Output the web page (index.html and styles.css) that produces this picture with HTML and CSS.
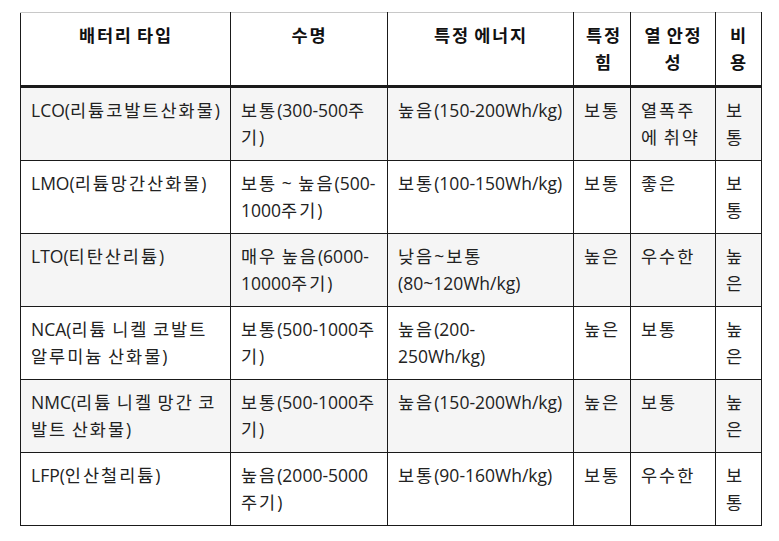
FILE: index.html
```html
<!DOCTYPE html>
<html lang="ko">
<head>
<meta charset="utf-8">
<title>배터리 타입 비교</title>
<link rel="stylesheet" href="styles.css">
</head>
<body>
<div class="page">
<table class="spec">
  <colgroup>
    <col class="c1"><col class="c2"><col class="c3"><col class="c4"><col class="c5"><col class="c6">
  </colgroup>
  <thead>
    <tr>
      <th>배터리 타입</th>
      <th>수명</th>
      <th>특정 에너지</th>
      <th>특정 힘</th>
      <th>열 안정성</th>
      <th>비용</th>
    </tr>
  </thead>
  <tbody>
    <tr>
      <td>LCO(<span class="k">리튬코발트산화물</span>)</td>
      <td><span class="k">보통</span>(300-500<span class="k">주기</span>)</td>
      <td><span class="k">높음</span>(150-200Wh/kg)</td>
      <td><span class="k">보통</span></td>
      <td><span class="k">열폭주에 취약</span></td>
      <td><span class="k">보통</span></td>
    </tr>
    <tr>
      <td>LMO(<span class="k">리튬망간산화물</span>)</td>
      <td><span class="k">보통 ~ 높음</span>(500-1000<span class="k">주기</span>)</td>
      <td><span class="k">보통</span>(100-150Wh/kg)</td>
      <td><span class="k">보통</span></td>
      <td><span class="k">좋은</span></td>
      <td><span class="k">보통</span></td>
    </tr>
    <tr>
      <td>LTO(<span class="k">티탄산리튬</span>)</td>
      <td><span class="k">매우 높음</span>(6000-10000<span class="k">주기</span>)</td>
      <td><span class="k">낮음~보통</span>(80~120Wh/kg)</td>
      <td><span class="k">높은</span></td>
      <td><span class="k">우수한</span></td>
      <td><span class="k">높은</span></td>
    </tr>
    <tr>
      <td>NCA(<span class="k">리튬 니켈 코발트 알루미늄 산화물</span>)</td>
      <td><span class="k">보통</span>(500-1000<span class="k">주기</span>)</td>
      <td><span class="k">높음</span>(200-<br>250Wh/kg)</td>
      <td><span class="k">높은</span></td>
      <td><span class="k">보통</span></td>
      <td><span class="k">높은</span></td>
    </tr>
    <tr>
      <td>NMC(<span class="k">리튬 니켈 망간 코발트 산화물</span>)</td>
      <td><span class="k">보통</span>(500-1000<span class="k">주기</span>)</td>
      <td><span class="k">높음</span>(150-200Wh/kg)</td>
      <td><span class="k">높은</span></td>
      <td><span class="k">보통</span></td>
      <td><span class="k">높은</span></td>
    </tr>
    <tr>
      <td>LFP(<span class="k">인산철리튬</span>)</td>
      <td><span class="k">높음</span>(2000-5000<span class="k">주기</span>)</td>
      <td><span class="k">보통</span>(90-160Wh/kg)</td>
      <td><span class="k">보통</span></td>
      <td><span class="k">우수한</span></td>
      <td><span class="k">보통</span></td>
    </tr>
  </tbody>
</table>
</div>
</body>
</html>
```
FILE: styles.css
```css
html, body {
  margin: 0;
  padding: 0;
  background: #ffffff;
}

.page {
  padding: 12px 0 0 20px;
}

.spec {
  border-collapse: collapse;
  table-layout: fixed;
  width: 742px;
  font-family: "Open Sans", "Noto Sans CJK KR", sans-serif;
  font-size: 17.5px;
  line-height: 27px;
  color: #222222;
}

.c1 { width: 210px; }
.c2 { width: 157px; }
.c3 { width: 186px; }
.c4 { width: 57px; }
.c5 { width: 85px; }
.c6 { width: 46px; }

.spec th,
.spec td {
  border: 1px solid #1a1a1a;
  padding: 9px 9px 9px 10px;
  vertical-align: top;
  text-align: left;
}

.spec td:nth-child(2),
.spec td:nth-child(3) {
  padding-right: 7px;
}

.spec th:nth-child(4),
.spec td:nth-child(4) {
  padding-right: 6px;
}

.spec th {
  border-top-color: #c8c8c8;
  border-bottom: 3px solid #1a1a1a;
  text-align: center;
  font-weight: 700;
  letter-spacing: 1.8px;
  word-spacing: -2px;
  color: #111111;
}

.spec tbody tr:nth-child(odd) td {
  background: #f5f5f5;
}

.k {
  letter-spacing: 2px;
  word-spacing: -2px;
}
```
